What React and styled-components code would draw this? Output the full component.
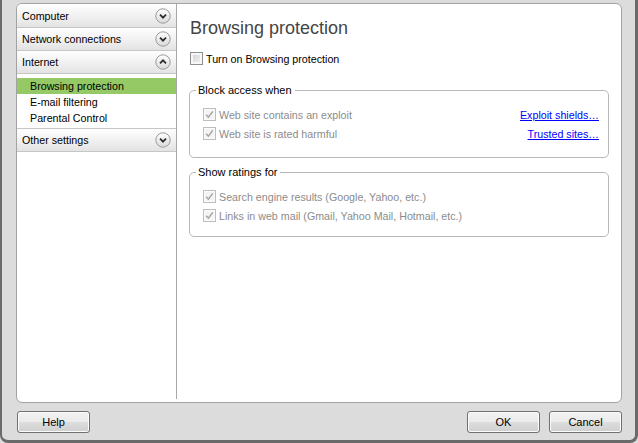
import styled, { createGlobalStyle } from "styled-components";

const GlobalStyle = createGlobalStyle`
    html, body {
        margin: 0;
        padding: 0;
        background: #dcdcdc;
    }
    * {
        box-sizing: border-box;
    }
`;

const sections = [
    { title: "Computer", open: false },
    { title: "Network connections", open: false },
    {
        title: "Internet",
        open: true,
        items: ["Browsing protection", "E-mail filtering", "Parental Control"],
        active: 0,
    },
    { title: "Other settings", open: false },
];

const Frame = styled.div`
    width: 638px;
    height: 443px;
    display: flex;
    flex-direction: column;
    padding: 3px 13px 0 14px;
    background: #dcdcdc;
    border-left: 2px solid #6a6a6a;
    border-right: 3px solid #6a6a6a;
    border-bottom: 3px solid #6a6a6a;
    border-radius: 0 0 8px 8px;
    font-family: "Liberation Sans", Arial, sans-serif;
    font-size: 10.7px;
    color: #000;
`;

const Panel = styled.div`
    flex: 1;
    display: grid;
    grid-template-columns: 160px 1fr;
    background: #fff;
    border: 1px solid #a3a3a3;
    border-radius: 6px;
    overflow: hidden;
`;

const Sidebar = styled.div`
    border-right: 1px solid #a8a8a8;
    margin-bottom: 3px;
`;

const Section = styled.div``;

/* heights include the 1px bottom border */
const Header = styled.div`
    height: 23px;
    display: flex;
    align-items: center;
    justify-content: space-between;
    padding: 0 5px 0 5px;
    background: linear-gradient(#fefefe, #f3f3f3 45%, #e3e3e3);
    border-bottom: 1px solid #c6c6c6;

    ${Section}:first-child & {
        height: 24px;
    }
`;

const SubList = styled.div`
    padding: 4px 0 2px;
    border-bottom: 1px solid #c6c6c6;
`;

const SubItem = styled.div`
    height: 16px;
    line-height: 16px;
    padding-left: 13px;
    background: ${(p) => (p.$active ? "#94c966" : "transparent")};
`;

const Content = styled.div`
    padding: 13px 12px 0 12px;
`;

const Title = styled.h1`
    margin: 0;
    font-size: 18px;
    line-height: 22px;
    font-weight: normal;
    color: #454545;
    padding-left: 1px;
`;

const CheckRow = styled.label`
    display: flex;
    align-items: center;
    height: ${(p) => (p.$tall ? "19px" : "15px")};
    gap: 3px;
    color: ${(p) => (p.$disabled ? "#8c8c8c" : "#000")};
`;

const TopCheck = styled(CheckRow)`
    margin: 12px 0 17px 1px;
`;

const Box = styled.span`
    width: 13px;
    height: 13px;
    flex: none;
    display: flex;
    align-items: center;
    justify-content: center;
    border: 1px solid ${(p) => (p.$disabled ? "#bdbdbd" : "#8e8f8f")};
    background: ${(p) =>
        p.$disabled
            ? "#f4f4f4"
            : "linear-gradient(135deg, #cfcfcf, #f6f6f6)"};
    box-shadow: inset 0 0 0 ${(p) => (p.$disabled ? "1px #fbfbfb" : "2px #f7f7f7")};
`;

const Group = styled.fieldset`
    margin: 0 0 7px;
    min-width: 0;
    padding: 8px 9px ${(p) => p.$bottom}px 6px;
    border: 1px solid #b8b8b8;
    border-radius: 5px;
`;

const Legend = styled.legend`
    padding: 0 3px 0 2px;
    line-height: 14px;
    font-size: 11px;
`;

const Row = styled.div`
    display: flex;
    align-items: center;
    justify-content: space-between;
    padding-left: 7px;
`;

const Link = styled.a`
    color: #0000ff;
    text-decoration: underline;
    cursor: pointer;
`;

const Footer = styled.div`
    display: flex;
    justify-content: space-between;
    padding: 8px 0 7px 1px;
`;

const ButtonGroup = styled.div`
    display: flex;
    gap: 9px;
`;

const Button = styled.button`
    width: 73px;
    height: 22px;
    padding: 0;
    font-family: inherit;
    font-size: 11px;
    color: #000;
    border: 1px solid #707070;
    border-radius: 3px;
    background: linear-gradient(#f2f2f2, #ebebeb 48%, #dddddd 52%, #cfcfcf);
    box-shadow: inset 0 0 0 1px #fcfcfc;
    cursor: pointer;
`;

const Chevron = ({ up }) => (
    <svg width="16" height="16" viewBox="0 0 16 16">
        <defs>
            <linearGradient id={up ? "cu" : "cd"} x1="0" y1="0" x2="0" y2="1">
                <stop offset="0" stopColor="#ffffff" />
                <stop offset="1" stopColor="#d9d9d9" />
            </linearGradient>
        </defs>
        <circle cx="8" cy="8" r="7.2" fill={`url(#${up ? "cu" : "cd"})`} stroke="#9b9b9b" strokeWidth="1" />
        <path
            d={up ? "M5 9.3 L8 6.3 L11 9.3" : "M5 6.7 L8 9.7 L11 6.7"}
            fill="none"
            stroke="#2b2b2b"
            strokeWidth="1.7"
        />
    </svg>
);

const Check = () => (
    <svg width="9" height="9" viewBox="0 0 9 9">
        <path d="M1.2 4.8 L3.4 7.2 L7.8 1.4" fill="none" stroke="#a4a4a4" strokeWidth="1.5" />
    </svg>
);

const Checkbox = ({ checked, disabled }) => (
    <Box $disabled={disabled}>{checked && <Check />}</Box>
);

export default function App() {
    return (
        <>
            <GlobalStyle />
            <Frame>
                <Panel>
                    <Sidebar>
                        {sections.map((s) => (
                            <Section key={s.title}>
                                <Header>
                                    <span>{s.title}</span>
                                    <Chevron up={s.open} />
                                </Header>
                                {s.open && (
                                    <SubList>
                                        {s.items.map((item, i) => (
                                            <SubItem key={item} $active={i === s.active}>
                                                {item}
                                            </SubItem>
                                        ))}
                                    </SubList>
                                )}
                            </Section>
                        ))}
                    </Sidebar>
                    <Content>
                        <Title>Browsing protection</Title>
                        <TopCheck>
                            <Checkbox />
                            <span>Turn on Browsing protection</span>
                        </TopCheck>

                        <Group $bottom={14}>
                            <Legend>Block access when</Legend>
                            <Row>
                                <CheckRow $tall $disabled>
                                    <Checkbox checked disabled />
                                    <span>Web site contains an exploit</span>
                                </CheckRow>
                                <Link>Exploit shields…</Link>
                            </Row>
                            <Row>
                                <CheckRow $tall $disabled>
                                    <Checkbox checked disabled />
                                    <span>Web site is rated harmful</span>
                                </CheckRow>
                                <Link>Trusted sites…</Link>
                            </Row>
                        </Group>

                        <Group $bottom={11}>
                            <Legend>Show ratings for</Legend>
                            <Row>
                                <CheckRow $tall $disabled>
                                    <Checkbox checked disabled />
                                    <span>Search engine results (Google, Yahoo, etc.)</span>
                                </CheckRow>
                            </Row>
                            <Row>
                                <CheckRow $tall $disabled>
                                    <Checkbox checked disabled />
                                    <span>Links in web mail (Gmail, Yahoo Mail, Hotmail, etc.)</span>
                                </CheckRow>
                            </Row>
                        </Group>
                    </Content>
                </Panel>
                <Footer>
                    <Button>Help</Button>
                    <ButtonGroup>
                        <Button>OK</Button>
                        <Button>Cancel</Button>
                    </ButtonGroup>
                </Footer>
            </Frame>
        </>
    );
}
